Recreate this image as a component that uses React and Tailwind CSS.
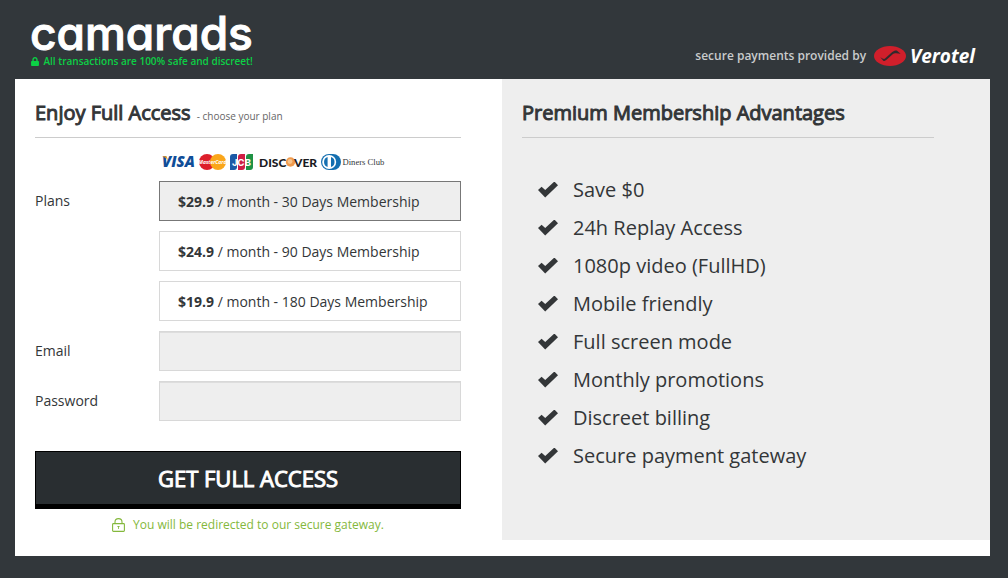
import { useState } from 'react';
import { FaLock } from 'react-icons/fa';

const PLANS = [
  { id: 'm1', price: '$29.9', label: '30 Days Membership' },
  { id: 'm3', price: '$24.9', label: '90 Days Membership' },
  { id: 'm6', price: '$19.9', label: '180 Days Membership' },
];

const ADVANTAGES = [
  'Save $0',
  '24h Replay Access',
  '1080p video (FullHD)',
  'Mobile friendly',
  'Full screen mode',
  'Monthly promotions',
  'Discreet billing',
  'Secure payment gateway',
];

function CheckIcon() {
  return (
    <svg viewBox="0 0 20 17" className="h-[17px] w-5 shrink-0" fill="currentColor" aria-hidden="true">
      <path d="M0 8.1 3.6 4.7 7.2 7.9 16.4 -0.5 20 3.3 7.2 15.5Z" />
    </svg>
  );
}

function PadlockIcon() {
  return (
    <svg viewBox="0 0 13 14" className="h-[14px] w-[13px]" fill="none" stroke="currentColor" aria-hidden="true">
      <rect x="0.6" y="5.6" width="11.8" height="7.8" rx="0.8" strokeWidth="1.1" />
      <path d="M3 5.6V3.9a3.5 3.3 0 0 1 7 0v1.7" strokeWidth="1.1" />
      <path d="M5 8h3L6.9 9.2V11h-.8V9.2Z" fill="currentColor" stroke="none" />
    </svg>
  );
}

function CardLogos() {
  return (
    <svg viewBox="0 0 226 18" className="block h-[18px] w-[226px] overflow-visible" role="img" aria-label="Accepted cards">
      <text x="2" y="14" fontFamily="Open Sans, sans-serif" fontSize="15" fontWeight="800" fontStyle="italic" fill="#0f4d98">
        VISA
      </text>
      <path d="M2 3.2h4.6l1.5 4L5.6 4.8Z" fill="#f0a020" />

      <circle cx="47" cy="9" r="8" fill="#dd1f2b" />
      <circle cx="58" cy="9" r="8" fill="#faa61a" />
      <text x="52.5" y="11" textAnchor="middle" fontFamily="Open Sans, sans-serif" fontSize="5" fontWeight="700" fontStyle="italic" fill="#fff">
        MasterCard
      </text>

      <path d="M73 1h4v13a3 3 0 0 1-3 3h-4V4a3 3 0 0 1 3-3Z" fill="#1c5aa6" />
      <path d="M81 1h4v13a3 3 0 0 1-3 3h-4V4a3 3 0 0 1 3-3Z" fill="#cf1f45" />
      <path d="M89 1h4v13a3 3 0 0 1-3 3h-4V4a3 3 0 0 1 3-3Z" fill="#1f9245" />
      <text x="81.5" y="12.5" textAnchor="middle" fontFamily="Inter, sans-serif" fontSize="9.5" fontWeight="700" fill="#fff">
        JCB
      </text>

      <text x="99" y="13.5" fontFamily="Lato, sans-serif" fontSize="12" fontWeight="900" fill="#1b1b1f">
        DISC
      </text>
      <circle cx="130.5" cy="9" r="4.7" fill="#ef9a4d" />
      <circle cx="130" cy="8.5" r="2.4" fill="#f8c48c" />
      <text x="134" y="13.5" fontFamily="Lato, sans-serif" fontSize="12" fontWeight="900" fill="#1b1b1f">
        VER
      </text>

      <path d="M169 1h4a8 8 0 0 1 0 16h-4a8 8 0 0 1 0-16Z" fill="#146fb0" />
      <circle cx="169.2" cy="9" r="7" fill="#fff" />
      <path d="M167.6 4a5.3 5.3 0 0 0 0 10ZM171 4a5.3 5.3 0 0 1 0 10Z" fill="#146fb0" />
      <text x="182.5" y="12" fontFamily="Liberation Serif, serif" fontSize="8.6" fill="#33363a">
        Diners Club
      </text>
    </svg>
  );
}

function VerotelLogo() {
  return (
    <a href="#verotel" aria-label="Verotel" className="flex items-center gap-1">
      <svg viewBox="0 0 32 20" className="h-5 w-8" aria-hidden="true">
        <ellipse cx="16" cy="10" rx="16" ry="10" fill="#d01f2b" />
        <path
          d="M6.3 11.2 9.5 15c1.4-.1 2.4-.7 3.6-1.8l5.6-5c1-.9 2-1.2 3.3-1l4.6.6-3.8-3.3c-1.8-.2-3.2.3-4.6 1.600l-6.600 6c-.9.8-1.6 1-2.6.7Z"
          fill="#33292c"
        />
      </svg>
      <span className="text-[19px]/5 font-bold text-white italic">Verotel</span>
    </a>
  );
}

function Header() {
  return (
    <header className="flex h-[79px] items-end justify-between px-[15px]">
      <div className="flex flex-col items-end pb-3">
        <a
          href="#home"
          className="font-[Inter,sans-serif] text-[46px]/[44px] font-medium text-white [-webkit-text-stroke:1px_white] [font-feature-settings:'cv11','ss06'] [stroke-linejoin:round]"
        >
          camarads
        </a>
        <p className="flex items-center gap-1 text-[10px]/3 font-semibold text-[#0cd045]">
          <FaLock className="h-[9px] w-2" />
          All transactions are 100% safe and discreet!
        </p>
      </div>
      <div className="flex items-center gap-2 pb-[13px] text-xs/5 font-semibold text-[#c9cbcc]">
        secure payments provided by
        <VerotelLogo />
      </div>
    </header>
  );
}

function SignupForm() {
  const [plan, setPlan] = useState('m1');

  return (
    <form className="pt-[18px] pr-[41px] pl-5" onSubmit={(e) => e.preventDefault()}>
      <div className="flex items-baseline gap-1.5 border-b border-[#ccc] pb-2">
        <h1 className="text-xl/8 [-webkit-text-stroke:1px_currentColor]">Enjoy Full Access</h1>
        <small className="text-[10px]/4 text-[#666]">- choose your plan</small>
      </div>

      <div className="mt-[15px] mb-2.5 ml-[125px]">
        <CardLogos />
      </div>

      <div className="flex" role="radiogroup" aria-labelledby="plans-label">
        <span id="plans-label" className="w-[124px] shrink-0 text-sm/10">
          Plans
        </span>
        <div className="flex flex-1 flex-col gap-2.5">
          {PLANS.map((p) => (
            <label
              key={p.id}
              className="relative h-10 cursor-pointer border border-[#d8d8d8] pl-[18px] text-sm/[40px] has-checked:border-[#777] has-checked:bg-[#eee]"
            >
              <input
                type="radio"
                name="plan"
                value={p.id}
                checked={plan === p.id}
                onChange={() => setPlan(p.id)}
                className="absolute inset-0 cursor-pointer appearance-none"
              />
              <strong className="font-bold">{p.price}</strong> / month - {p.label}
            </label>
          ))}
        </div>
      </div>

      <div className="mt-2.5 flex">
        <label htmlFor="email" className="w-[124px] shrink-0 text-sm/10">
          Email
        </label>
        <input
          id="email"
          type="email"
          className="h-10 min-w-0 flex-1 border border-[#d8d8d8] bg-[#eee] px-4 text-sm shadow-[inset_0_1px_0_#ddd]"
        />
      </div>
      <div className="mt-2.5 flex">
        <label htmlFor="password" className="w-[124px] shrink-0 text-sm/10">
          Password
        </label>
        <input
          id="password"
          type="password"
          className="h-10 min-w-0 flex-1 border border-[#d8d8d8] bg-[#eee] px-4 text-sm shadow-[inset_0_1px_0_#ddd]"
        />
      </div>

      <button
        type="submit"
        className="mt-[30px] h-[58px] w-full cursor-pointer border border-b-[5px] border-black bg-[#292e31] text-[22px] text-white [-webkit-text-stroke:1px_currentColor]"
      >
        GET FULL ACCESS
      </button>
      <p className="mt-1.5 flex items-center justify-center gap-2 text-xs/5 text-[#84b83c]">
        <PadlockIcon />
        You will be redirected to our secure gateway.
      </p>
    </form>
  );
}

function Advantages() {
  return (
    <section className="bg-[#eee] pt-[18px] pr-14 pb-[65px] pl-5">
      <h2 className="border-b border-[#ccc] pb-2 text-xl/8 [-webkit-text-stroke:1px_currentColor]">
        Premium Membership Advantages
      </h2>
      <ul className="mt-[33px] pl-4">
        {ADVANTAGES.map((item) => (
          <li key={item} className="flex h-[38px] items-center gap-[15px] text-xl">
            <CheckIcon />
            {item}
          </li>
        ))}
      </ul>
    </section>
  );
}

export default function App() {
  return (
    <div className="min-h-screen bg-[#32373b] pr-[18px] pb-[22px] pl-[15px] font-['Open_Sans',sans-serif] text-[#333638]">
      <Header />
      <main className="grid grid-cols-[487fr_488fr] bg-white pb-4">
        <SignupForm />
        <Advantages />
      </main>
    </div>
  );
}
